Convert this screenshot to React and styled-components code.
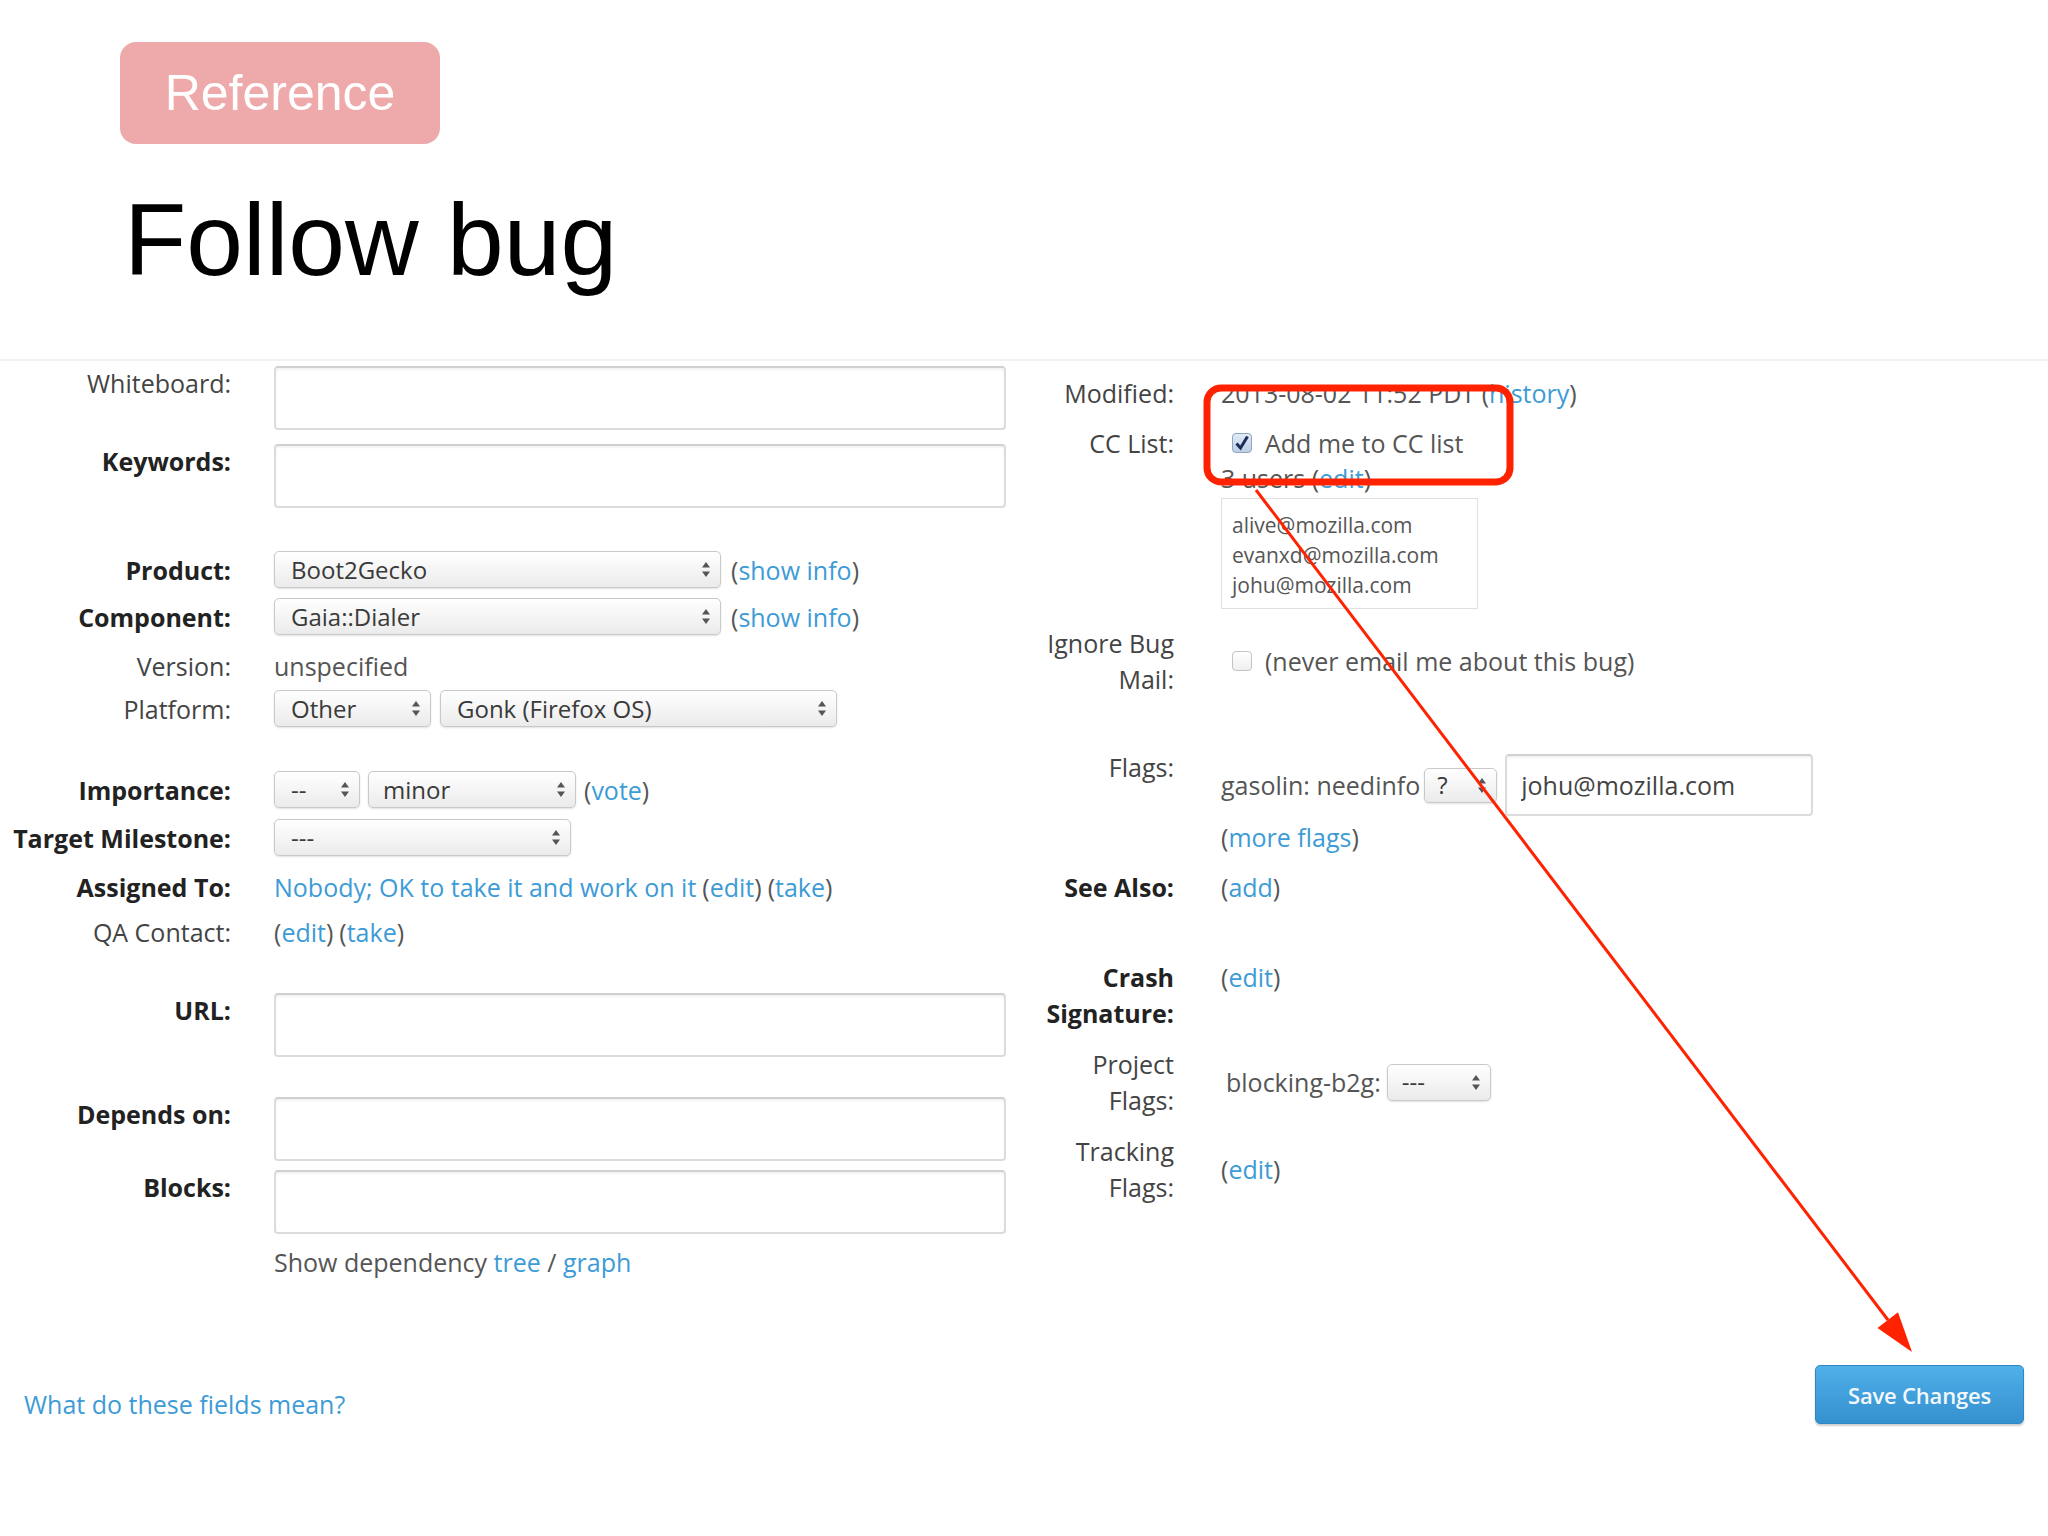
import React from "react";
import styled, { createGlobalStyle } from "styled-components";

const GlobalStyle = createGlobalStyle`
  html, body { margin: 0; padding: 0; background: #fff; }
  body { font-family: "Open Sans", "Noto Sans", sans-serif; }
`;

const Page = styled.div`
  position: relative;
  width: 2048px;
  height: 1536px;
  overflow: hidden;
  background: #fff;
`;

// slide header
const Header = styled.header`
  box-sizing: border-box;
  height: 359px;
  padding: 42px 0 0 120px;
  font-family: "Liberation Sans", Arial, sans-serif;
`;

const Badge = styled.div`
  display: flex;
  align-items: center;
  justify-content: center;
  width: 320px;
  height: 102px;
  border-radius: 16px;
  background: #eeaaaa;
  color: #fff;
  font-size: 50px;
`;

const Title = styled.h1`
  margin: 45px 0 0 4px;
  font-size: 102px;
  font-weight: 400;
  line-height: 1;
  color: #000;
`;

// bug form
const Form = styled.section`
  display: flex;
  border-top: 2px solid #f2f2f2;
  font-size: 25px;
  color: #555;
`;

const LeftColumn = styled.div`
  width: 1040px;
  padding-top: 5px;
`;

const RightColumn = styled.div`
  flex: 1;
  padding-top: 15px;
`;

const LeftRow = styled.div`
  display: grid;
  grid-template-columns: 231px 732px;
  column-gap: 43px;
  align-items: ${p => p.$align || "start"};
  margin-top: ${p => p.$top || 0}px;
`;

const RightRow = styled.div`
  display: grid;
  grid-template-columns: 134px 1fr;
  column-gap: 47px;
  align-items: ${p => p.$align || "start"};
  margin-top: ${p => p.$top || 0}px;
`;

const Label = styled.div`
  text-align: right;
  line-height: ${p => p.$lh || 34}px;
  font-weight: ${p => (p.$bold ? 700 : 400)};
  color: ${p => (p.$bold ? "#222" : "#444")};
  white-space: pre-line;
`;

const Value = styled.div`
  display: flex;
  align-items: center;
  gap: ${p => (p.$gap === undefined ? 10 : p.$gap)}px;
  line-height: ${p => p.$lh || 34}px;
  padding-left: ${p => p.$indent || 0}px;
  white-space: nowrap;
`;

const Stack = styled.div`
  display: flex;
  flex-direction: column;
  padding-top: ${p => p.$pt || 0}px;
`;

const Line = styled.div`
  display: flex;
  align-items: center;
  gap: ${p => (p.$gap === undefined ? 10 : p.$gap)}px;
  line-height: 34px;
  margin-top: ${p => p.$top || 0}px;
  white-space: nowrap;
`;

const Link = styled.a`
  color: #3d9bd6;
  text-decoration: none;
  cursor: pointer;
`;

const TextField = styled.input`
  box-sizing: border-box;
  width: ${p => p.$w || 732}px;
  height: ${p => p.$h || 64}px;
  margin: 0 0 0 ${p => p.$ml || 0}px;
  padding: 0 14px;
  border: 2px solid #dcdcdc;
  border-top-color: #d0d0d0;
  border-radius: 4px;
  background: #fff;
  box-shadow: inset 0 2px 2px rgba(0, 0, 0, 0.05);
  font-family: inherit;
  font-size: 25px;
  color: #444;
  outline: none;
`;

const SelectBox = styled.div`
  box-sizing: border-box;
  display: flex;
  align-items: center;
  justify-content: space-between;
  width: ${p => p.$w}px;
  height: ${p => p.$h || 37}px;
  padding: 0 10px 0 ${p => p.$pl || 16}px;
  border: 1.5px solid #c9c9c9;
  border-radius: 5px;
  background: linear-gradient(#ffffff, #ebebeb);
  box-shadow: 0 1px 2px rgba(0, 0, 0, 0.12);
  font-size: 24px;
  line-height: 1;
  color: #3a3a3a;
  flex-shrink: 0;
`;

const CheckBox = styled.span`
  box-sizing: border-box;
  display: inline-flex;
  align-items: center;
  justify-content: center;
  width: 20px;
  height: 20px;
  margin-left: 11px;
  border: 1.5px solid ${p => (p.$on ? "#8ea4c0" : "#c4c4c4")};
  border-radius: 4px;
  background: ${p =>
    p.$on ? "linear-gradient(#e2ebf6, #bccfe5)" : "linear-gradient(#ffffff, #efefef)"};
`;

const CcBox = styled.div`
  box-sizing: border-box;
  width: 257px;
  height: 111px;
  margin-top: 3px;
  padding: 11px 0 0 10px;
  border: 1.5px solid #e0e0e0;
  font-size: 21px;
  line-height: 30px;
  color: #555;
`;

const Footer = styled.footer`
  display: flex;
  justify-content: space-between;
  align-items: flex-end;
  margin-top: 86px;
  padding: 0 24px;
  font-size: 25px;
`;

const HelpLink = styled(Link)`
  line-height: 34px;
  margin-bottom: 3px;
`;

const SaveButton = styled.button`
  box-sizing: border-box;
  width: 209px;
  height: 59px;
  border: 1px solid #2f86c2;
  border-radius: 5px;
  background: linear-gradient(#4fb0e8, #3590cf);
  box-shadow: 0 2px 2px rgba(0, 0, 0, 0.2);
  color: #f2f8fc;
  font-family: "Open Sans", "Noto Sans", sans-serif;
  font-size: 22px;
  font-weight: 600;
  letter-spacing: -0.2px;
  cursor: pointer;
`;

const Overlay = styled.svg`
  position: absolute;
  left: 0;
  top: 0;
  width: 2048px;
  height: 1536px;
  pointer-events: none;
`;

const Arrows = () => (
  <svg width="8" height="15" viewBox="0 0 8 15">
    <polygon points="4,0 8,5.5 0,5.5" fill="#555" />
    <polygon points="0,9.5 8,9.5 4,15" fill="#555" />
  </svg>
);

const Select = ({ w, h, pl, children }) => (
  <SelectBox $w={w} $h={h} $pl={pl}>
    <span>{children}</span>
    <Arrows />
  </SelectBox>
);

const Paren = ({ children }) => (
  <span>
    (<Link>{children}</Link>)
  </span>
);

const Check = ({ on }) => (
  <CheckBox $on={on}>
    {on && (
      <svg width="16" height="16" viewBox="0 0 16 16">
        <path d="M2.5 8.5 L6.5 13 L13.5 1.5" fill="none" stroke="#1c2d5a" strokeWidth="3" />
      </svg>
    )}
  </CheckBox>
);

export default function App() {
  return (
    <Page>
      <GlobalStyle />
      <Header>
        <Badge>Reference</Badge>
        <Title>Follow bug</Title>
      </Header>

      <Form>
        <LeftColumn>
          <LeftRow>
            <Label>Whiteboard:</Label>
            <TextField defaultValue="" />
          </LeftRow>
          <LeftRow $top={14}>
            <Label $bold>Keywords:</Label>
            <TextField defaultValue="" />
          </LeftRow>
          <LeftRow $top={43} $align="center">
            <Label $bold>Product:</Label>
            <Value>
              <Select w={447}>Boot2Gecko</Select>
              <Paren>show info</Paren>
            </Value>
          </LeftRow>
          <LeftRow $top={10} $align="center">
            <Label $bold>Component:</Label>
            <Value>
              <Select w={447}>Gaia::Dialer</Select>
              <Paren>show info</Paren>
            </Value>
          </LeftRow>
          <LeftRow $top={14}>
            <Label>Version:</Label>
            <Value>unspecified</Value>
          </LeftRow>
          <LeftRow $top={7} $align="center">
            <Label>Platform:</Label>
            <Value $gap={9}>
              <Select w={157}>Other</Select>
              <Select w={397}>Gonk (Firefox OS)</Select>
            </Value>
          </LeftRow>
          <LeftRow $top={44} $align="center">
            <Label $bold>Importance:</Label>
            <Value $gap={8}>
              <Select w={86}>--</Select>
              <Select w={208} pl={14}>minor</Select>
              <Paren>vote</Paren>
            </Value>
          </LeftRow>
          <LeftRow $top={11} $align="center">
            <Label $bold>Target Milestone:</Label>
            <Value>
              <Select w={297}>---</Select>
            </Value>
          </LeftRow>
          <LeftRow $top={14}>
            <Label $bold>Assigned To:</Label>
            <Value $gap={6}>
              <Link>Nobody; OK to take it and work on it</Link>
              <Paren>edit</Paren>
              <Paren>take</Paren>
            </Value>
          </LeftRow>
          <LeftRow $top={11}>
            <Label>QA Contact:</Label>
            <Value $gap={6}>
              <Paren>edit</Paren>
              <Paren>take</Paren>
            </Value>
          </LeftRow>
          <LeftRow $top={44}>
            <Label $bold>URL:</Label>
            <TextField defaultValue="" />
          </LeftRow>
          <LeftRow $top={40}>
            <Label $bold>Depends on:</Label>
            <TextField defaultValue="" />
          </LeftRow>
          <LeftRow $top={9}>
            <Label $bold>Blocks:</Label>
            <TextField defaultValue="" />
          </LeftRow>
          <LeftRow $top={11}>
            <span />
            <Value $gap={0}>
              Show dependency&nbsp;<Link>tree</Link>&nbsp;/&nbsp;<Link>graph</Link>
            </Value>
          </LeftRow>
        </LeftColumn>

        <RightColumn>
          <RightRow>
            <Label>Modified:</Label>
            <Value $gap={0}>
              2013-08-02 11:52 PDT&nbsp;<Paren>history</Paren>
            </Value>
          </RightRow>
          <RightRow $top={16}>
            <Label>CC List:</Label>
            <Stack>
              <Line $gap={13}>
                <Check on />
                Add me to CC list
              </Line>
              <Line $top={1} $gap={0}>
                3 users&nbsp;<Paren>edit</Paren>
              </Line>
              <CcBox>
                alive@mozilla.com
                <br />
                evanxd@mozilla.com
                <br />
                johu@mozilla.com
              </CcBox>
            </Stack>
          </RightRow>
          <RightRow $top={16} $align="center">
            <Label $lh={36}>{"Ignore Bug\nMail:"}</Label>
            <Value $gap={13}>
              <Check />
              (never email me about this bug)
            </Value>
          </RightRow>
          <RightRow $top={53}>
            <Label>Flags:</Label>
            <Stack $pt={4}>
              <Line $gap={4}>
                gasolin: needinfo
                <Select w={73} h={35} pl={12}>?</Select>
                <TextField $w={308} $h={62} $ml={4} defaultValue="johu@mozilla.com" />
              </Line>
              <Line $top={4}>
                <Paren>more flags</Paren>
              </Line>
            </Stack>
          </RightRow>
          <RightRow $top={16}>
            <Label $bold>See Also:</Label>
            <Value>
              <Paren>add</Paren>
            </Value>
          </RightRow>
          <RightRow $top={55}>
            <Label $bold $lh={36}>{"Crash\nSignature:"}</Label>
            <Value $lh={36}>
              <Paren>edit</Paren>
            </Value>
          </RightRow>
          <RightRow $top={15} $align="center">
            <Label $lh={36}>{"Project\nFlags:"}</Label>
            <Value $gap={6} $indent={5}>
              blocking-b2g:
              <Select w={104} pl={14}>---</Select>
            </Value>
          </RightRow>
          <RightRow $top={15} $align="center">
            <Label $lh={36}>{"Tracking\nFlags:"}</Label>
            <Value>
              <Paren>edit</Paren>
            </Value>
          </RightRow>
        </RightColumn>
      </Form>

      <Footer>
        <HelpLink>What do these fields mean?</HelpLink>
        <SaveButton>Save Changes</SaveButton>
      </Footer>

      <Overlay viewBox="0 0 2048 1536">
        <rect x="1207" y="388" width="303" height="94" rx="14" fill="none" stroke="#ff2200" strokeWidth="7" />
        <line x1="1256" y1="490" x2="1888" y2="1320" stroke="#ff2200" strokeWidth="3" />
        <polygon points="1912,1352 1877.5,1328 1898,1312.3" fill="#ff2200" />
      </Overlay>
    </Page>
  );
}
